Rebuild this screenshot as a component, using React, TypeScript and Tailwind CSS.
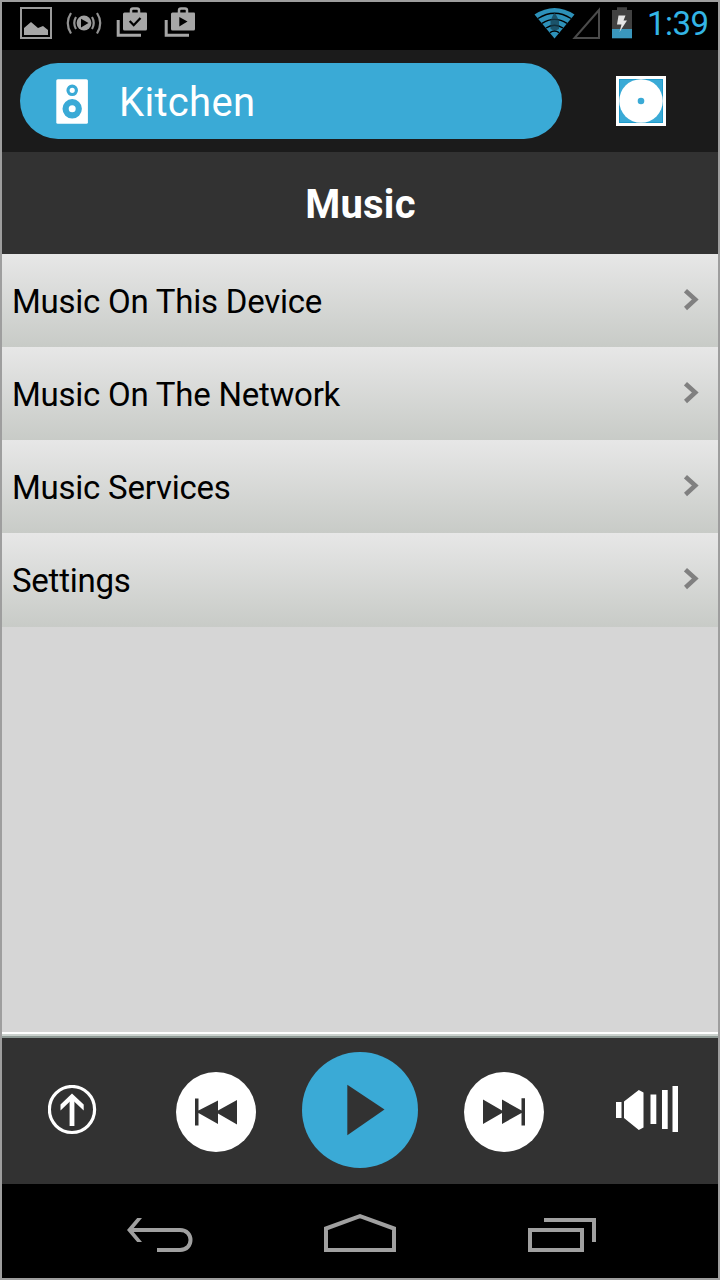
import React from "react";

const ROWS = ["Music On This Device", "Music On The Network", "Music Services", "Settings"];

function StatusBar() {
  return (
    <div className="flex h-12 shrink-0 items-center justify-between bg-black pr-[10px] pl-4">
      <svg className="h-12 w-[184px]" viewBox="18 2 184 48" fill="none">
        <rect x="21" y="8" width="30" height="30" stroke="#9b9b9b" strokeWidth="2" />
        <path d="M24 35V28L31 22L38 28L43 26L48 30V35Z" fill="#a6a6a6" />
        <circle cx="84" cy="23" r="7.4" fill="#a0a0a0" />
        <path d="M81 18.700V27.500L88.500 23.100Z" fill="#000" />
        <path d="M76 17Q72.500 23 76 29M92 17Q95.500 23 92 29M71 13Q64.500 23 71 33.500M97 13Q103.500 23 97 33.500" stroke="#929292" strokeWidth="2.200" />
        <path d="M118.200 20V35.200H141M166.200 20V35.200H189" stroke="#a6a6a6" strokeWidth="3" />
        <path d="M124.500 12.500H146Q147 12.500 147 13.500V29Q147 30.500 145.500 30.500H124.500Q123 30.500 123 29V14Q123 12.500 124.500 12.500Z" fill="#a6a6a6" />
        <path d="M172.500 12.500H194Q195 12.500 195 13.500V29Q195 30.500 193.500 30.500H172.500Q171 30.500 171 29V14Q171 12.500 172.500 12.500Z" fill="#a6a6a6" />
        <path d="M131 13V10.500Q131 8.500 133 8.500H137Q139 8.500 139 10.500V13M179 13V10.500Q179 8.500 181 8.500H185Q187 8.500 187 10.500V13" stroke="#a6a6a6" strokeWidth="2.500" />
        <path d="M129.700 21L133.700 25.200L140.500 18" stroke="#000" strokeWidth="2.300" />
        <path d="M179.300 17V26.500L187.500 21.500Z" fill="#000" />
      </svg>
      <div className="flex items-center">
        <svg className="h-12 w-[104px]" viewBox="532 2 104 48" fill="none">
          <path d="M534.500 14.500Q554.500 1.500 574.500 14.500L554.500 38.500Z" fill="#2d91b9" />
          <path d="M538 18.500Q554.500 8 571 18.500M542 23.300Q554.500 15.500 567 23.300M546 28Q554.500 22.500 563 28M550 32.600Q554.500 29.500 559 32.600" stroke="#000" strokeWidth="1.400" />
          <path d="M554.500 12L559 20.500V29Q554.500 31.500 550.500 29V20.500Z" fill="#163f50" opacity=".75" />
          <path d="M574.500 38H599V10Z" stroke="#4b4b4b" strokeWidth="2" />
          <path d="M612 10H617V7.200H627V10H632V29H612Z" fill="#414141" />
          <rect x="612" y="29" width="20" height="9.300" fill="#3a97bd" />
          <path d="M618.500 15.500H625.500L623.500 20.500H627L619.500 32L621.500 24.500H617Z" fill="#e6e6e6" />
        </svg>
        <time className="ml-[11px] w-[61px] pb-[5px] text-[33px] leading-none tracking-[-0.5px] whitespace-nowrap text-[#33b5e5]">1:39</time>
      </div>
    </div>
  );
}

function Header() {
  return (
    <header className="flex h-[102px] shrink-0 items-center bg-[#1b1b1b] pl-[18px]">
      <button className="flex h-[75.500px] w-[541.500px] items-center rounded-full bg-[#3aaad6] pl-[36px]">
        <svg className="mt-[2px] h-[46px] w-8" viewBox="56 79 32 46">
          <rect x="56.300" y="79.300" width="31.600" height="44.500" rx="1.500" fill="#fff" />
          <circle cx="72.200" cy="90.300" r="4.200" fill="none" stroke="#3aaad6" strokeWidth="3.200" />
          <circle cx="72.200" cy="108.800" r="6.600" fill="none" stroke="#3aaad6" strokeWidth="6.200" />
        </svg>
        <span className="ml-[31px] pt-[3px] text-[40px] leading-none tracking-[0.3px] text-white">Kitchen</span>
      </button>
      <svg className="ml-[54.500px] h-[50px] w-[50px]" viewBox="616 76 50 50">
        <rect x="616" y="76" width="50" height="50" fill="#fff" />
        <rect x="619.500" y="79.500" width="43" height="43" fill="#3aaad6" stroke="#1d9bcc" />
        <circle cx="641" cy="101" r="21.800" fill="#fff" />
        <circle cx="641" cy="101" r="3.300" fill="#3aaad6" />
      </svg>
    </header>
  );
}

function Controls() {
  return (
    <div className="flex h-[146px] shrink-0 items-center bg-[#323232] pb-[2px] pl-[46px]">
      <svg className="h-[50px] w-[49px]" viewBox="48 1085 49 50" fill="none">
        <ellipse cx="72" cy="1109.500" rx="22.600" ry="23" stroke="#fff" strokeWidth="3.200" />
        <path d="M72 1126V1097" stroke="#fff" strokeWidth="4.800" />
        <path d="M72 1093.500L83.700 1104.500V1110.500L72 1099.500L60.500 1110.500V1104.500Z" fill="#fff" />
      </svg>
      <svg className="mt-[4px] ml-[79px] h-20 w-20" viewBox="176 1072 80 80">
        <circle cx="216" cy="1112" r="40" fill="#fff" />
        <path d="M195 1098.500H198.500V1110.500L218 1100.500V1110.500L237 1100V1124.500L218 1113.500V1124L198.500 1113V1125.500H195Z" fill="#323232" />
      </svg>
      <svg className="ml-[46px] h-[116px] w-[116px]" viewBox="302 1052 116 116">
        <circle cx="360" cy="1110" r="58" fill="#3aaad6" />
        <path d="M347.300 1084.700V1135.300L384.500 1109.500Z" fill="#323232" />
      </svg>
      <svg className="mt-[4px] ml-[46px] h-20 w-20" viewBox="464 1072 80 80">
        <circle cx="504" cy="1112" r="40" fill="#fff" />
        <path d="M483 1099.500L502 1110.500V1099.500L521.500 1110.500V1098.300H525V1125.500H521.500V1113L502 1124V1113L483 1124Z" fill="#323232" />
      </svg>
      <svg className="ml-[72px] h-[50px] w-[64px]" viewBox="616 1085 64 50" fill="#fff">
        <path d="M616 1102H621.500V1118H616ZM624 1101.500L638.800 1090L643.500 1092.500V1127.500L638.800 1130L624 1118ZM650.500 1094.500H656.300V1124H650.500ZM662 1090H667.700V1129H662ZM672.500 1086H678V1132H672.500Z" />
      </svg>
    </div>
  );
}

function NavBar() {
  return (
    <nav className="flex h-[94px] shrink-0 items-center bg-black pl-[123px]">
      <svg className="h-[46px] w-[70px]" viewBox="125 1208 70 46" fill="none" stroke="#a0a0a0" strokeWidth="4">
        <path d="M157 1250H180C194 1250 194 1230 180 1230H130" />
        <path d="M137.200 1218H142L132 1230L142 1242H137.200L127 1230Z" fill="#a0a0a0" stroke="none" />
      </svg>
      <svg className="ml-[127px] h-[46px] w-[76px]" viewBox="322 1208 76 46" fill="none" stroke="#a0a0a0" strokeWidth="4">
        <path d="M326 1250V1228.500L360 1216.200L394 1228.500V1250Z" />
      </svg>
      <svg className="ml-[128px] h-[46px] w-[72px]" viewBox="526 1208 72 46" fill="none" stroke="#a0a0a0" strokeWidth="4">
        <path d="M530 1230H582V1250H530ZM544 1220H594V1242" />
      </svg>
    </nav>
  );
}

export default function App() {
  return (
    <div className="flex h-[1280px] w-[720px] flex-col overflow-hidden border-2 border-[#9e9e9e] bg-[#d6d6d6] font-['Roboto',sans-serif]">
      <StatusBar />
      <Header />
      <h1 className="flex h-[102px] shrink-0 items-center justify-center bg-[#323232] pt-[3px] pl-px text-[40px] leading-none font-bold tracking-[0.2px] text-white">
        Music
      </h1>
      <ul className="flex-1">
        {ROWS.map((label) => (
          <li
            key={label}
            className="flex h-[93px] items-center justify-between bg-linear-to-b from-[#e7e7e7] to-[#c8cbc7] pr-[19px] pl-[10px] last:h-[94px]"
          >
            <span className="pt-px text-[33px] leading-none tracking-[-0.24px] text-black">{label}</span>
            <svg className="mb-[2px] h-[22px] w-[15px]" viewBox="684 289 15 22" fill="none">
              <path d="M685.500 290.700L695.300 299.500L685.500 308.500" stroke="#808080" strokeWidth="4.500" />
            </svg>
          </li>
        ))}
      </ul>
      <div className="h-[6px] shrink-0 border-t-2 border-b-2 border-t-white border-b-[#8f9b96] bg-[#cbd2ce]" />
      <Controls />
      <NavBar />
    </div>
  );
}
